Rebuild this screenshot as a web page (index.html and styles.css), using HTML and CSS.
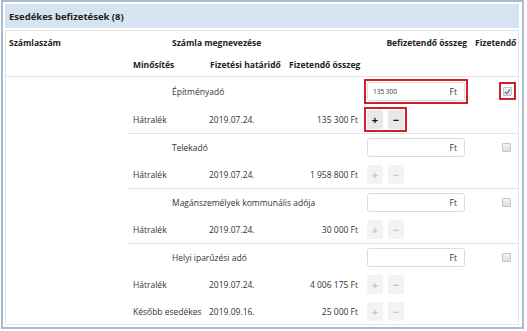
FILE: index.html
```html
<!DOCTYPE html>
<html lang="hu">
<head>
  <meta charset="UTF-8">
  <meta name="viewport" content="width=device-width, initial-scale=1.0">
  <title>Esedékes befizetések</title>
  <link rel="stylesheet" href="styles.css">
</head>
<body>
  <div class="frame">
    <div class="title-bar">Esedékes befizetések (8)</div>

    <div class="panel">
      <div class="thead">
        <div class="th c-acct">Számlaszám</div>
        <div class="th c-name">Számla megnevezése</div>
        <div class="th c-pay">Befizetendő összeg</div>
        <div class="th c-check">Fizetendő</div>
        <div class="th c-qual">Minősítés</div>
        <div class="th c-date">Fizetési határidő</div>
        <div class="th c-amount">Fizetendő összeg</div>
      </div>

      <div class="tbody">
        <div class="acct"></div>
        <div class="groups">

          <div class="group">
            <div class="c-name">Építményadó</div>
            <div class="c-pay">
              <div class="mark-box">
                <div class="money-input"><span class="value">135 300</span><span class="unit">Ft</span></div>
              </div>
            </div>
            <div class="c-check"><span class="check-wrap marked"><span class="checkbox checked">
              <svg viewBox="0 0 9 9" width="9" height="9"><path d="M2 4.8 L3.8 6.6 L7 2.4" fill="none" stroke="#4a6fa5" stroke-width="1.2"/></svg>
            </span></span></div>
            <div class="c-qual">Hátralék</div>
            <div class="c-date">2019.07.24.</div>
            <div class="c-amount">135 300 Ft</div>
            <div class="c-pay"><div class="steppers marked"><span class="step">+</span><span class="step">−</span></div></div>
          </div>

          <div class="group">
            <div class="c-name">Telekadó</div>
            <div class="c-pay"><div class="money-input"><span class="value"></span><span class="unit">Ft</span></div></div>
            <div class="c-check"><span class="check-wrap"><span class="checkbox"></span></span></div>
            <div class="c-qual">Hátralék</div>
            <div class="c-date">2019.07.24.</div>
            <div class="c-amount">1 958 800 Ft</div>
            <div class="c-pay"><div class="steppers"><span class="step off">+</span><span class="step off">−</span></div></div>
          </div>

          <div class="group">
            <div class="c-name">Magánszemélyek kommunális adója</div>
            <div class="c-pay"><div class="money-input"><span class="value"></span><span class="unit">Ft</span></div></div>
            <div class="c-check"><span class="check-wrap"><span class="checkbox"></span></span></div>
            <div class="c-qual">Hátralék</div>
            <div class="c-date">2019.07.24.</div>
            <div class="c-amount">30 000 Ft</div>
            <div class="c-pay"><div class="steppers"><span class="step off">+</span><span class="step off">−</span></div></div>
          </div>

          <div class="group">
            <div class="c-name">Helyi iparűzési adó</div>
            <div class="c-pay"><div class="money-input"><span class="value"></span><span class="unit">Ft</span></div></div>
            <div class="c-check"><span class="check-wrap"><span class="checkbox"></span></span></div>
            <div class="c-qual">Hátralék</div>
            <div class="c-date">2019.07.24.</div>
            <div class="c-amount">4 006 175 Ft</div>
            <div class="c-pay"><div class="steppers"><span class="step off">+</span><span class="step off">−</span></div></div>
            <div class="c-qual">Később esedékes</div>
            <div class="c-date">2019.09.16.</div>
            <div class="c-amount">25 000 Ft</div>
            <div class="c-pay"><div class="steppers"><span class="step off">+</span><span class="step off">−</span></div></div>
          </div>

        </div>
      </div>
    </div>
  </div>
</body>
</html>
```

FILE: styles.css
```css
* {
  box-sizing: border-box;
}
html, body {
  margin: 0;
  background: #fff;
}
body {
  font-family: "Open Sans", "Noto Sans", sans-serif;
  font-size: 8.5px;
  color: #333;
}
.frame {
  margin: 0 3px 2px 1px;
  height: 329px;
  border: 2px solid #a9bbcf;
  padding: 2px 3px 2px 2px;
  display: flex;
  flex-direction: column;
  gap: 2px;
}
.title-bar {
  height: 24px;
  background: #d6e4f1;
  font-weight: bold;
  font-size: 9.5px;
  color: #222;
  padding-left: 4px;
  display: flex;
  align-items: center;
}
.panel {
  flex: 1;
  border: 1px solid #e6e6e6;
  overflow: hidden;
}
.thead {
  display: grid;
  grid-template-columns: 122px 77px 80px 77px 108px 48px;
  grid-template-rows: 22px 23px;
  border-bottom: 1px solid #e3e3e3;
}
.th {
  font-weight: bold;
  color: #222;
  display: flex;
  align-items: center;
}
.thead .c-acct {
  grid-column: 1;
  grid-row: 1;
  padding-left: 3px;
}
.thead .c-name {
  grid-column: 2 / span 3;
  grid-row: 1;
  padding-left: 44px;
}
.thead .c-pay {
  grid-column: 5;
  grid-row: 1;
  justify-content: flex-end;
  padding-right: 3px;
}
.thead .c-check {
  grid-column: 6;
  grid-row: 1;
  padding-left: 5px;
}
.thead .c-qual {
  grid-column: 2;
  grid-row: 2;
  padding-left: 5px;
}
.thead .c-date {
  grid-column: 3;
  grid-row: 2;
  padding-left: 5px;
}
.thead .c-amount {
  grid-column: 4;
  grid-row: 2;
  padding-left: 4px;
}
.tbody {
  display: flex;
}
.acct {
  width: 122px;
}
.groups {
  flex: 1;
}
.group {
  display: grid;
  grid-template-columns: 77px 80px 77px 108px 48px;
  grid-auto-rows: 27px;
  border-top: 1px solid #e3e3e3;
}
.group:first-child {
  border-top: none;
  grid-auto-rows: 28px;
}
.group > div {
  display: flex;
  align-items: center;
}
.group .c-name {
  grid-column: 1 / span 3;
  padding-left: 44px;
}
.group .c-qual {
  grid-column: 1;
  padding-left: 5px;
}
.group .c-date {
  grid-column: 2;
  padding-left: 4px;
}
.group .c-amount {
  grid-column: 3;
  justify-content: flex-end;
  padding-right: 4px;
}
.group .c-pay {
  grid-column: 4;
  padding-left: 5px;
}
.group .c-check {
  grid-column: 5;
  justify-content: flex-end;
  padding-right: 6px;
}
.money-input {
  width: 98px;
  height: 19px;
  border: 1px solid #dcdcdc;
  border-radius: 3px;
  background: #fff;
  display: flex;
  align-items: center;
  justify-content: space-between;
  padding: 0 7px 0 5px;
}
.money-input .value {
  font-size: 6.5px;
  color: #333;
}
.money-input .unit {
  font-size: 8.5px;
  color: #333;
}
.mark-box {
  border: 2px solid #d0202c;
  padding: 1px;
  margin: -3px;
}
.marked {
  outline: 2px solid #d0202c;
  outline-offset: 1px;
}
.check-wrap {
  display: flex;
  align-items: center;
  justify-content: center;
  width: 15px;
  height: 16px;
}
.check-wrap:not(.marked) {
  width: 11px;
}
.check-wrap.marked {
  outline-offset: -1px;
  margin-right: -3px;
}
.checkbox {
  width: 9px;
  height: 9px;
  border: 1px solid #c4c4c4;
  border-radius: 1px;
  background: linear-gradient(#f4f4f4, #dcdcdc);
  display: flex;
}
.checkbox svg {
  margin: -1px;
}
.steppers {
  display: flex;
  gap: 5px;
}
.steppers.marked {
  margin-left: -1px;
  padding: 1px;
  outline-offset: 0;
}
.step {
  width: 16px;
  height: 19px;
  border-radius: 2px;
  background: #e8e8e8;
  color: #111;
  font-weight: bold;
  font-size: 11px;
  display: flex;
  align-items: center;
  justify-content: center;
}
.step.off {
  background: #f3f3f3;
  color: #c8c8c8;
}
```
